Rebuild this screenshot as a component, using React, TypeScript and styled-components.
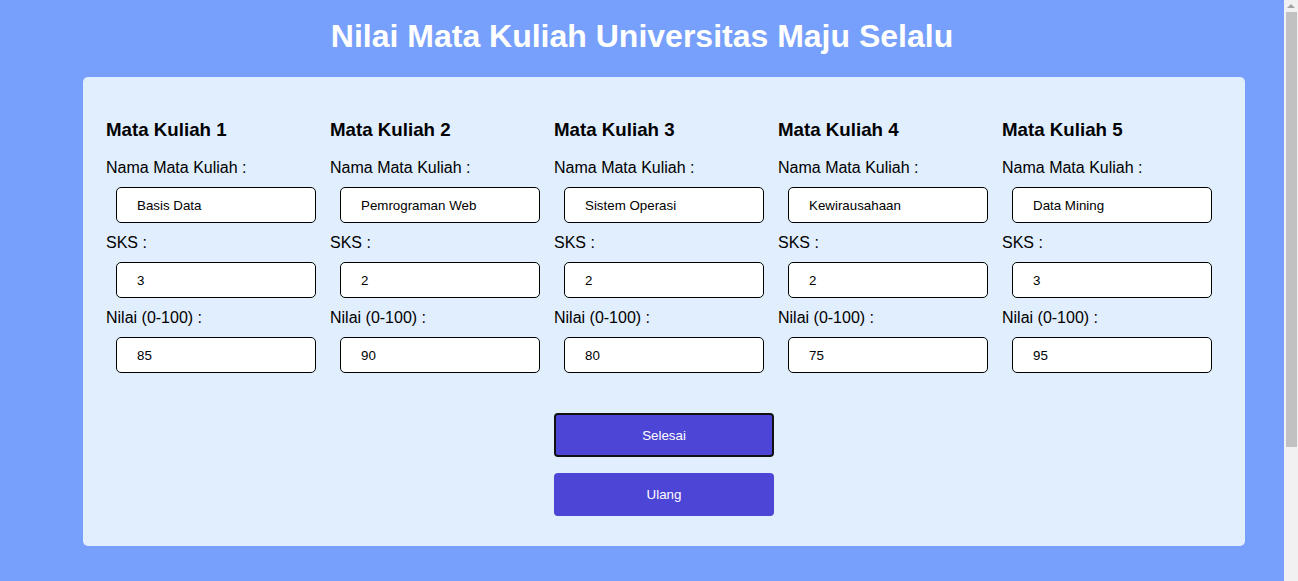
import React from "react";
import styled, { createGlobalStyle } from "styled-components";

type Course = {
  nama: string;
  sks: string;
  nilai: string;
};

const courses: Course[] = [
  { nama: "Basis Data", sks: "3", nilai: "85" },
  { nama: "Pemrograman Web", sks: "2", nilai: "90" },
  { nama: "Sistem Operasi", sks: "2", nilai: "80" },
  { nama: "Kewirausahaan", sks: "2", nilai: "75" },
  { nama: "Data Mining", sks: "3", nilai: "95" },
];

const GlobalStyle = createGlobalStyle`
  html, body {
    margin: 0;
    padding: 0;
    background: #77a0fc;
    font-family: "Liberation Sans", Arial, sans-serif;
    color: #000;
  }
`;

const Page = styled.div`
  width: 1284px;
  min-height: 744px;
  box-sizing: border-box;
  padding-top: 18px;
`;

const Title = styled.h1`
  margin: 0 0 22px;
  text-align: center;
  color: #fff;
  font-size: 32px;
  line-height: 37px;
  font-weight: bold;
`;

const Card = styled.div`
  box-sizing: border-box;
  width: 1162px;
  margin-left: 83px;
  padding: 42px 19px 30px 23px;
  background: #e1eefe;
  border-radius: 5px;
`;

const Columns = styled.div`
  display: grid;
  grid-template-columns: repeat(5, 224px);
`;

const Column = styled.div`
  display: flex;
  flex-direction: column;
`;

const Heading = styled.h3`
  margin: 0 0 18px;
  font-size: 18.72px;
  line-height: 22px;
  font-weight: bold;
`;

const Label = styled.label`
  display: block;
  font-size: 16px;
  line-height: 18px;
  margin-bottom: 10px;
`;

const Input = styled.input`
  box-sizing: border-box;
  width: 200px;
  height: 36px;
  margin: 0 0 11px 10px;
  padding: 0 0 0 20px;
  border: 1px solid #000;
  border-radius: 5px;
  background: #fff;
  font-family: "Liberation Sans", Arial, sans-serif;
  font-size: 13.33px;
  color: #000;
  outline: none;
`;

const ButtonStack = styled.div`
  display: flex;
  flex-direction: column;
  align-items: center;
  gap: 16px;
  margin-top: 29px;
  padding-right: 4px;
`;

const Button = styled.button<{ $focused?: boolean }>`
  box-sizing: border-box;
  width: 220px;
  height: ${(p) => (p.$focused ? "44px" : "43px")};
  border: ${(p) => (p.$focused ? "2px solid #111" : "none")};
  border-radius: 4px;
  background: #4d45d6;
  color: #fff;
  font-family: "Liberation Sans", Arial, sans-serif;
  font-size: 13.33px;
  cursor: pointer;
`;

const ScrollTrack = styled.div`
  position: fixed;
  top: 0;
  right: 0;
  width: 14px;
  height: 100vh;
  background: #f1f1f1;
`;

const ScrollArrow = styled.div`
  position: absolute;
  top: 4px;
  left: 3px;
  width: 0;
  height: 0;
  border-left: 4px solid transparent;
  border-right: 4px solid transparent;
  border-bottom: 4px solid #a3a3a3;
`;

const ScrollThumb = styled.div`
  position: absolute;
  top: 12px;
  left: 2px;
  width: 11px;
  height: 435px;
  background: #c1c1c1;
`;

const App = () => {
  return (
    <Page>
      <GlobalStyle />
      <Title>Nilai Mata Kuliah Universitas Maju Selalu</Title>
      <Card>
        <Columns>
          {courses.map((c, i) => (
            <Column key={i}>
              <Heading>Mata Kuliah {i + 1}</Heading>
              <Label>Nama Mata Kuliah :</Label>
              <Input defaultValue={c.nama} />
              <Label>SKS :</Label>
              <Input defaultValue={c.sks} />
              <Label>Nilai (0-100) :</Label>
              <Input defaultValue={c.nilai} />
            </Column>
          ))}
        </Columns>
        <ButtonStack>
          <Button $focused>Selesai</Button>
          <Button>Ulang</Button>
        </ButtonStack>
      </Card>
      <ScrollTrack>
        <ScrollArrow />
        <ScrollThumb />
      </ScrollTrack>
    </Page>
  );
};

export default App;
